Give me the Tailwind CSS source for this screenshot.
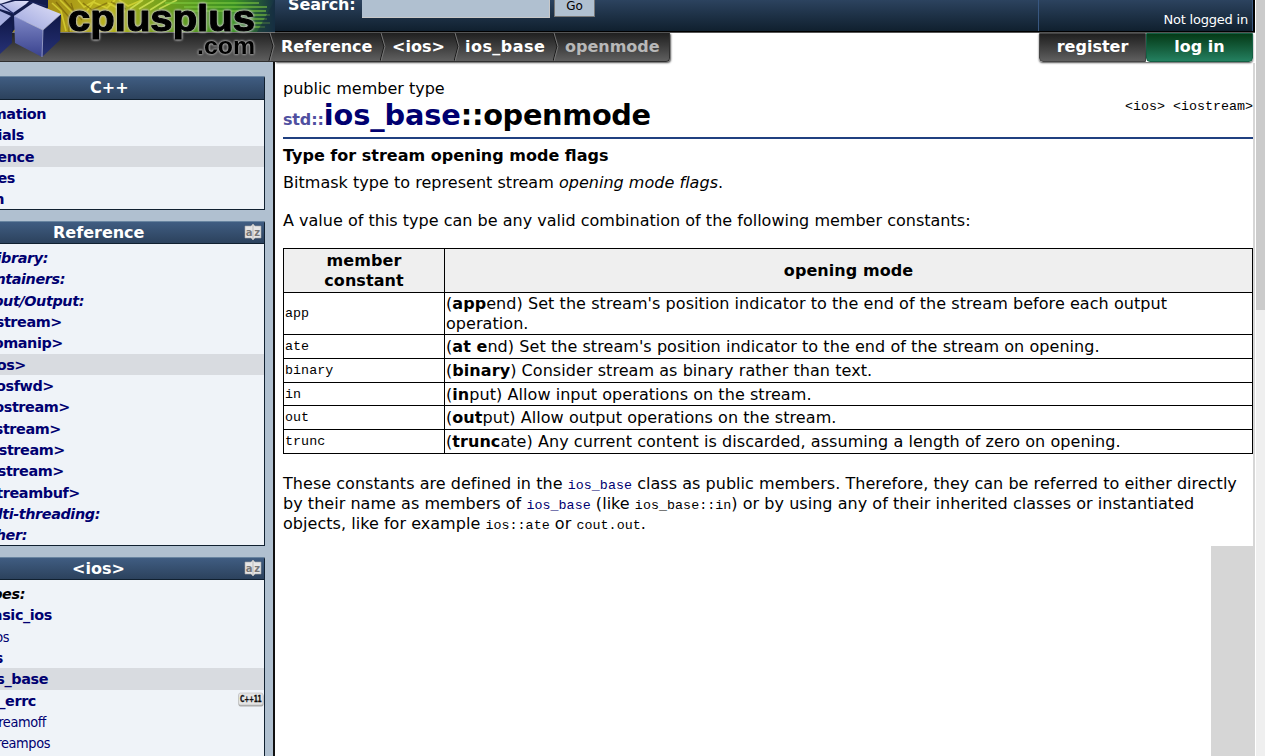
<!DOCTYPE html>
<html lang="en">
<head>
<meta charset="utf-8">
<title>ios_base::openmode</title>
<script src="https://cdn.jsdelivr.net/npm/@tailwindcss/browser@4"></script>
</head>
<body class="relative flex h-[756px] w-[1265px] overflow-hidden bg-white font-['DejaVu_Sans','Liberation_Sans',sans-serif] text-base leading-5 text-black">
<div class="flex h-full w-[1255px] flex-col">
  <header class="flex h-[33px] shrink-0 border-b border-[#555] bg-black">
    <div class="relative z-10 h-[63px] w-[275px] shrink-0">
      <svg class="block" width="275" height="63" viewBox="0 0 275 63">
        <defs>
          <linearGradient id="board" x1="0" x2="1" y1="0" y2="0"><stop offset=".18" stop-color="#a58f16"/><stop offset=".4" stop-color="#b9b41c"/><stop offset=".6" stop-color="#6fa01d"/><stop offset=".85" stop-color="#3a9224"/><stop offset="1" stop-color="#163045"/></linearGradient>
          <linearGradient id="bar" x1="0" x2="0" y1="0" y2="1"><stop offset="0" stop-color="#202020"/><stop offset="1" stop-color="#606060"/></linearGradient>
          <linearGradient id="top" x1="0" x2="1" y1="1" y2="0"><stop offset="0" stop-color="#9aa2dc"/><stop offset="1" stop-color="#e0e1f8"/></linearGradient>
          <linearGradient id="left" x1="0" x2="0" y1="0" y2="1"><stop offset="0" stop-color="#7f88c6"/><stop offset="1" stop-color="#39428e"/></linearGradient>
          <linearGradient id="side" x1="0" x2="0" y1="0" y2="1"><stop offset="0" stop-color="#0f1746"/><stop offset="1" stop-color="#263176"/></linearGradient>
          <filter id="soft"><feGaussianBlur stdDeviation=".6"/></filter>
        </defs>
        <rect width="275" height="32" fill="url(#board)"/>
        <g filter="url(#soft)">
        <g fill="none" stroke="#e0dc3a" stroke-width="1.6" opacity=".7"><path d="M52 3l9 8 5 20M60 0l13 13-3 18M78 0l6 7 9-5 14 6 8-8M95 0l-8 11M119 0l9 6 14-6M108 3l17 9"/><path stroke="#dff060" d="M143 0l-13 9M154 0l-15 9M166 0l-16 10M177 0l-18 9"/></g>
        <g fill="none" stroke="#614b05" stroke-width="1.4" opacity=".5"><path d="M56 2l13 15v15M64 0l18 20M83 3l9 7 15-7M111 2l15 7M71 3l6 18"/></g>
        <g stroke="#84cf42" stroke-width="1.4" opacity=".7"><path d="M165 3h94M184 7h83M182 11h84M240 15h30M244 19h23M242 23h28M245 27h20"/></g>
        </g>
        <path d="M275 0v32h-18z" fill="#152b40" opacity=".55"/>
        <rect y="32" width="275" height="30" fill="url(#bar)"/><path d="M0 32.5h275" stroke="#777"/><path d="M0 61.5h275" stroke="#303030"/>
        <path d="M269 33l4 13-4 15" fill="none" stroke="#171717"/><path d="M270 33l4 13-4 15" fill="none" stroke="#777"/>
        <path d="M0 0h48v8L14 30 0 50z" fill="#131c4c"/>
        <path d="M0 0h12L0 4z" fill="#dfe1f7"/><path d="M0 5L15 1h14l-3 3-13 9L0 9z" fill="url(#top)"/><path d="M0 4l14 10M30 2l16 4" fill="none" stroke="#202a66" stroke-width="1.2"/>
        <path d="M0 11l11 5-11 10z" fill="#a8afe0"/><path d="M0 27l12-10v26L0 54z" fill="url(#side)"/>
        <path d="M14 16L33 3l28 11-18 16z" fill="url(#top)"/><path d="M14 16l29 14-1 27-27-14z" fill="url(#left)"/><path d="M43 30l18-16-1 26-18 17z" fill="url(#side)"/><path d="M14 16l29 14 18-16M43 30l-1 27" fill="none" stroke="#b9bfe8" stroke-width=".7"/>
        <g font-family="Liberation Sans" font-weight="700" stroke-linejoin="round">
          <text class="[filter:drop-shadow(0_0_1px_#ccc)_drop-shadow(0_0_1px_#bbb)]" x="68" y="30.5" font-size="36" textLength="187" lengthAdjust="spacingAndGlyphs" stroke="#000" stroke-width="1">cplusplus</text>
          <text class="[filter:drop-shadow(0_0_1px_#bbb)_drop-shadow(0_0_1px_#999)]" x="197" y="53.5" font-size="24" textLength="58" lengthAdjust="spacingAndGlyphs">.com</text>
        </g>
      </svg>
    </div>
    <div class="flex h-[31px] w-[763px] bg-linear-to-b from-[#2c435f] to-[#10202f] pl-[13px]">
      <b class="-mt-[5px] w-[74px] tracking-[-0.1px] text-white">Search:</b>
      <span class="h-[18px] w-[188px] border-r border-b border-[#c8c8c8] bg-[#b0c0d0]"></span>
      <span class="ml-[4px] h-[17px] w-[41px] border border-t-0 border-[#777] bg-[#b0c0d0] text-center text-xs leading-3">Go</span>
    </div>
    <div class="flex h-[31px] w-[215px] items-end justify-end border-x border-[#385780] bg-linear-to-b from-[#2c435f] to-[#10202f] pr-[4px] pb-px text-[13px] tracking-[-0.2px] text-white">Not logged in</div>
  </header>
  <div class="flex min-h-0 flex-1">
    <aside class="flex w-[275px] shrink-0 flex-col overflow-hidden border-r-2 border-[#101010] bg-[#b0c0d0] pt-[43px] text-[14.4px] leading-[22px] font-bold tracking-[-0.4px] text-[#000070]">
      <section class="mb-[11px] h-[134px] w-[265px] shrink-0 rounded-tr-xs border-r border-b border-[#102030]">
        <h2 class="h-[24px] border-t border-b border-t-[#6884a0] border-b-[#102030] bg-linear-to-b from-[#405d82] to-[#2c425d] pl-[90px] text-base leading-[21px] tracking-normal text-white">C++</h2>
        <div class="h-[109px] bg-[#eff3f8] pt-[3px]">
          <div class="flex h-[21.33px] w-[46px] justify-end whitespace-nowrap">Information</div>
          <div class="flex h-[21.33px] w-[24px] justify-end whitespace-nowrap">Tutorials</div>
          <div class="h-[21.33px] bg-[#d8dbe0]"><div class="flex w-[34px] justify-end whitespace-nowrap">Reference</div></div>
          <div class="flex h-[21.33px] w-[15px] justify-end whitespace-nowrap">Articles</div>
          <div class="flex h-[21.33px] w-[4px] justify-end whitespace-nowrap">Forum</div>
        </div>
      </section>
      <section class="mb-[11px] h-[325px] w-[265px] shrink-0 rounded-tr-xs border-r border-b border-[#102030]">
        <h2 class="flex h-[23px] justify-between border-t border-b border-t-[#6884a0] border-b-[#102030] bg-linear-to-b from-[#405d82] to-[#2c425d] pr-[2px] pl-[53px] text-base leading-[21px] tracking-normal text-white">Reference
          <svg class="mt-[1px]" width="18" height="18" viewBox="0 0 18 18"><path d="M1 3h6l2-2 2 2h6v12h-6l-2 2-2-2H1z" fill="#e6e6e6" stroke="#aaa" stroke-width=".6"/><path d="M9 1v16" stroke="#bbb"/><text x="1.8" y="12.5" font-size="10" font-family="DejaVu Sans" font-weight="700" fill="#777">a</text><text x="10.2" y="12.5" font-size="10" font-family="DejaVu Sans" font-weight="700" fill="#777">z</text></svg></h2>
        <div class="h-[301px] bg-[#eff3f8] pt-[3px]">
          <div class="flex h-[21.33px] w-[48px] justify-end whitespace-nowrap italic">C library:</div>
          <div class="flex h-[21.33px] w-[65px] justify-end whitespace-nowrap italic">Containers:</div>
          <div class="flex h-[21.33px] w-[84px] justify-end whitespace-nowrap italic">Input/Output:</div>
          <div class="flex h-[21.33px] w-[62px] justify-end whitespace-nowrap">&lt;fstream&gt;</div>
          <div class="flex h-[21.33px] w-[63px] justify-end whitespace-nowrap">&lt;iomanip&gt;</div>
          <div class="h-[21.33px] bg-[#d8dbe0]"><div class="flex w-[26px] justify-end whitespace-nowrap">&lt;ios&gt;</div></div>
          <div class="flex h-[21.33px] w-[54px] justify-end whitespace-nowrap">&lt;iosfwd&gt;</div>
          <div class="flex h-[21.33px] w-[70px] justify-end whitespace-nowrap">&lt;iostream&gt;</div>
          <div class="flex h-[21.33px] w-[61px] justify-end whitespace-nowrap">&lt;istream&gt;</div>
          <div class="flex h-[21.33px] w-[65px] justify-end whitespace-nowrap">&lt;ostream&gt;</div>
          <div class="flex h-[21.33px] w-[64px] justify-end whitespace-nowrap">&lt;sstream&gt;</div>
          <div class="flex h-[21.33px] w-[80px] justify-end whitespace-nowrap">&lt;streambuf&gt;</div>
          <div class="flex h-[21.33px] w-[100px] justify-end whitespace-nowrap italic">Multi-threading:</div>
          <div class="flex h-[21.33px] w-[27px] justify-end whitespace-nowrap italic">Other:</div>
        </div>
      </section>
      <section class="h-[220px] w-[265px] shrink-0 rounded-tr-xs border-r border-[#102030]">
        <h2 class="flex h-[23px] justify-between border-t border-b border-t-[#6884a0] border-b-[#102030] bg-linear-to-b from-[#405d82] to-[#2c425d] pr-[2px] pl-[72px] text-base leading-[21px] tracking-normal text-white">&lt;ios&gt;
          <svg class="mt-[1px]" width="18" height="18" viewBox="0 0 18 18"><path d="M1 3h6l2-2 2 2h6v12h-6l-2 2-2-2H1z" fill="#e6e6e6" stroke="#aaa" stroke-width=".6"/><path d="M9 1v16" stroke="#bbb"/><text x="1.8" y="12.5" font-size="10" font-family="DejaVu Sans" font-weight="700" fill="#777">a</text><text x="10.2" y="12.5" font-size="10" font-family="DejaVu Sans" font-weight="700" fill="#777">z</text></svg></h2>
        <div class="h-[197px] bg-[#eff3f8] pt-[3px] leading-[23px]">
          <div class="flex h-[21.33px] w-[25px] justify-end whitespace-nowrap text-black italic">types:</div>
          <div class="flex h-[21.33px] w-[52px] justify-end whitespace-nowrap">basic_ios</div>
          <div class="flex h-[21.33px] w-[9px] justify-end font-['DejaVu_Sans_Condensed'] font-normal whitespace-nowrap">fpos</div>
          <div class="flex h-[21.33px] w-[3px] justify-end whitespace-nowrap">ios</div>
          <div class="h-[21.33px] bg-[#d8dbe0]"><div class="flex w-[48px] justify-end whitespace-nowrap">ios_base</div></div>
          <div class="flex h-[21.33px] justify-between"><div class="flex w-[36px] justify-end whitespace-nowrap">io_errc</div>
            <svg class="mt-[2px]" width="26" height="15" viewBox="0 0 26 15"><rect x=".5" y="2" width="25" height="12.5" rx="2" fill="#aaa"/><rect x=".5" y="1" width="24.5" height="12" rx="2" fill="#e4e4e4" stroke="#bbb" stroke-width=".6"/><text x="2" y="10" font-size="8.5" font-family="DejaVu Sans" font-weight="700" textLength="21.5" lengthAdjust="spacingAndGlyphs" fill="#111" stroke="#111" stroke-width=".3">C++11</text></svg></div>
          <div class="flex h-[21.33px] w-[46px] justify-end font-['DejaVu_Sans_Condensed'] font-normal whitespace-nowrap">streamoff</div>
          <div class="flex h-[21.33px] w-[50px] justify-end font-['DejaVu_Sans_Condensed'] font-normal whitespace-nowrap">streampos</div>
        </div>
      </section>
    </aside>
    <main class="flex min-w-0 flex-1 flex-col">
      <div class="flex h-[30px] shrink-0 justify-between pr-[2px] font-bold text-white">
        <nav class="flex h-[29px] w-[395px] rounded-br border-r border-b border-[#303030] bg-linear-to-b from-[#202020] to-[#606060] leading-[27px] shadow-[1px_1px_2px_#555]">
          <span class="w-[105px] pl-[6px]">Reference</span>
          <svg class="w-[6px] shrink-0" viewBox="0 0 6 29"><path d="M0 0l4 14-4 15" fill="none" stroke="#171717"/><path d="M1 0l4 14-4 15" fill="none" stroke="#777"/></svg>
          <span class="w-[68px] pl-[6px]">&lt;ios&gt;</span>
          <svg class="w-[6px] shrink-0" viewBox="0 0 6 29"><path d="M0 0l4 14-4 15" fill="none" stroke="#171717"/><path d="M1 0l4 14-4 15" fill="none" stroke="#777"/></svg>
          <span class="w-[93px] pl-[5px] tracking-[0.45px]">ios_base</span>
          <svg class="w-[6px] shrink-0" viewBox="0 0 6 29"><path d="M0 0l4 14-4 15" fill="none" stroke="#171717"/><path d="M1 0l4 14-4 15" fill="none" stroke="#777"/></svg>
          <span class="pl-[6px] text-[#b8b8b8]">openmode</span>
        </nav>
        <div class="flex h-[29px] w-[214px] rounded-b text-center leading-[26px] shadow-[0_1px_2px_#555]">
          <span class="w-[107px] rounded-bl border border-[#454545] bg-linear-to-b from-[#202020] to-[#606060]">register</span>
          <span class="w-[107px] rounded-b border border-[#146044] bg-linear-to-b from-[#063a17] to-[#248060]">log in</span>
        </div>
      </div>
      <article class="flex min-h-0 flex-1 flex-col border-r-2 border-[#d6d6d6] pt-[16px] pl-[8px]">
        <div class="flex h-[60px] shrink-0 justify-between border-b-2 border-[#204080]">
          <div><div>public member type</div><h1 class="text-[28.8px] leading-[32px] font-bold tracking-[-0.34px] whitespace-nowrap"><span class="text-base tracking-[-0.15px] text-[#5050a0]">std::</span><span class="tracking-[-0.1px] text-[#000070]">ios_base</span>::openmode</h1></div>
          <code class="mt-[18px] font-['Liberation_Mono',monospace] text-[13.33px]">&lt;ios&gt; &lt;iostream&gt;</code>
        </div>
        <b class="mt-[7px]">Type for stream opening mode flags</b>
        <p class="mt-[7px] tracking-[0.03px]">Bitmask type to represent stream <i>opening mode flags</i>.</p>
        <p class="mt-[18px] tracking-[0.012px]">A value of this type can be any valid combination of the following member constants:</p>
        <table class="mt-[17px] w-[970px] shrink-0 table-fixed border-collapse text-left tracking-[0.06px] [&_td]:border [&_td]:border-black [&_td]:px-px [&_td]:pt-px [&_td]:align-middle [&_th]:border [&_th]:border-black [&_th]:bg-[#efefef] [&_th]:p-px [&_th]:text-center">
          <tr class="h-[44px]"><th class="w-[161px]">member<br>constant</th><th>opening mode</th></tr>
          <tr class="h-[42px]"><td class="font-['Liberation_Mono'] text-[13.33px]">app</td><td>(<b>app</b>end) Set the stream's position indicator to the end of the stream before each output<br>operation.</td></tr>
          <tr class="h-[24px]"><td class="font-['Liberation_Mono'] text-[13.33px]">ate</td><td>(<b>at e</b>nd) Set the stream's position indicator to the end of the stream on opening.</td></tr>
          <tr class="h-[24px]"><td class="font-['Liberation_Mono'] text-[13.33px]">binary</td><td>(<b>binary</b>) Consider stream as binary rather than text.</td></tr>
          <tr class="h-[23px]"><td class="font-['Liberation_Mono'] text-[13.33px]">in</td><td>(<b>in</b>put) Allow input operations on the stream.</td></tr>
          <tr class="h-[24px]"><td class="font-['Liberation_Mono'] text-[13.33px]">out</td><td>(<b>out</b>put) Allow output operations on the stream.</td></tr>
          <tr class="h-[24px]"><td class="font-['Liberation_Mono'] text-[13.33px]">trunc</td><td>(<b>trunc</b>ate) Any current content is discarded, assuming a length of zero on opening.</td></tr>
        </table>
        <p class="mt-[20px] h-[60px] shrink-0 tracking-[0.04px] whitespace-nowrap [&_code]:font-['Liberation_Mono'] [&_code]:text-[13.33px] [&_code]:leading-none">These constants are defined in the <code class="text-[#000070]">ios_base</code> class as public members. Therefore, they can be referred to either directly<br>by their name as members of <code class="text-[#000070]">ios_base</code> (like <code>ios_base::in</code>) or by using any of their inherited classes or instantiated<br>objects, like for example <code>ios::ate</code> or <code>cout.out</code>.</p>
        <div class="mt-[12px] ml-auto w-[42px] flex-1 bg-[#d6d6d6]"></div>
      </article>
    </main>
  </div>
</div>
<div class="ml-px flex-1 bg-[#efefef]"><div class="h-[310px] bg-[#cbcbcb]"></div></div>
</body>
</html>
